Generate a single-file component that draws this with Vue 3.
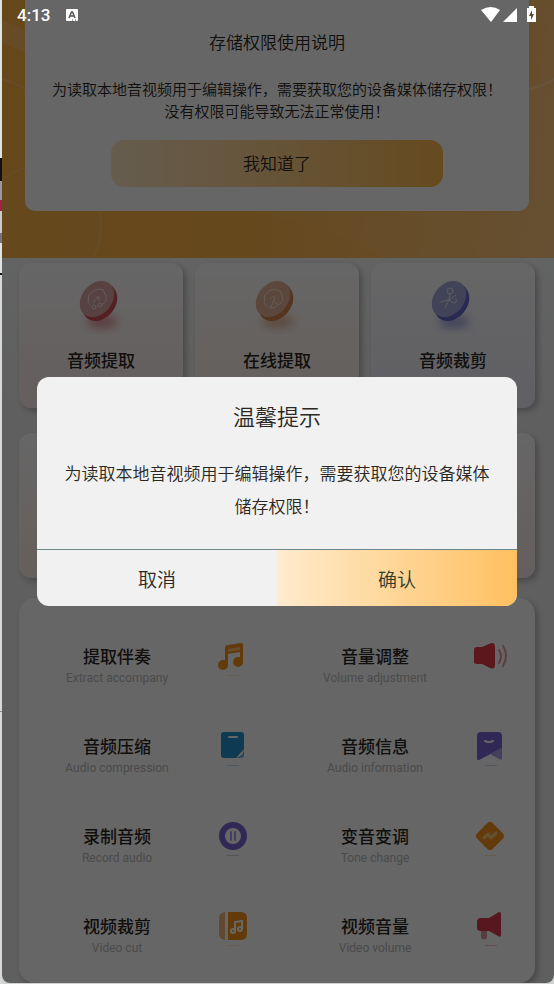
<template>
  <div class="screen">
    <div class="edge" aria-hidden="true"></div>
    <main class="phone">
      <!-- Permission banner -->
      <header class="banner">
        <svg class="banner-art" viewBox="0 0 552 258" preserveAspectRatio="none" aria-hidden="true">
          <path d="M0 20L23 30V52L0 43Z" fill="#fff" opacity=".14" />
          <path d="M0 79Q12 82 23 89" fill="none" stroke="#fff" stroke-width="2" opacity=".18" />
          <circle cx="38" cy="227" r="61" fill="#fff" fill-opacity=".03" stroke="#fff" stroke-opacity=".14" stroke-width="2" />
          <path d="M527 89Q541 86 552 79" fill="none" stroke="#fff" stroke-width="2" opacity=".3" />
          <path d="M250 212Q320 225 385 258H552V80Q541 86 527 89V212Z" fill="#fff" opacity=".04" />
        </svg>
        <section class="notice">
          <h2>存储权限使用说明</h2>
          <p>
            为读取本地音视频用于编辑操作，需要获取您的设备媒体储存权限！<br />
            没有权限可能导致无法正常使用！
          </p>
          <button type="button">我知道了</button>
        </section>
      </header>

      <!-- Tool cards -->
      <section class="cards">
        <article v-for="card in cards" :key="card.id" :class="['card', card.tone]">
          <template v-if="card.title">
            <svg width="60" height="60" viewBox="0 0 60 60" aria-hidden="true">
              <ellipse class="coin-shadow" cx="31" cy="48" rx="16" ry="6" />
              <g class="coin-rim">
                <ellipse cx="29" cy="29" rx="15" ry="20" transform="rotate(40 29 29)" />
                <ellipse cx="28" cy="27" rx="15" ry="20" transform="rotate(40 28 27)" />
              </g>
              <ellipse class="coin-face" cx="26" cy="25" rx="15" ry="20" transform="rotate(40 26 25)" />
              <g fill="none" stroke="#fff" stroke-width="1" stroke-linecap="round" stroke-linejoin="round" opacity=".7">
                <template v-if="card.icon === 'scissors'">
                  <circle cx="27" cy="17" r="3" />
                  <path d="M27 20L26 26L22 34M17 28L26 26L33 21M26 26L30 29Q35 29 33 25" />
                </template>
                <template v-else-if="card.icon === 'link'">
                  <path d="M21 33L17 29L18 21Q22 15 28 15L34 18L36 26L32 31M24 24Q27 21 28 24L26 28Q31 28 30 32L26 34H23L26 29" />
                </template>
                <template v-else>
                  <path d="M19 31L17 28L18 21L24 16Q28 14 32 16L35 22L35 27L32 30M22 28L28 23M25 23H28V26" />
                  <circle cx="23" cy="33" r="2" />
                  <circle cx="29" cy="31" r="2" />
                </template>
              </g>
            </svg>
            <h3>{{ card.title }}</h3>
          </template>
        </article>
      </section>

      <!-- Tool list -->
      <ul class="tools">
        <li v-for="tool in tools" :key="tool.en">
          <div class="tool-text">
            <h3>{{ tool.name }}</h3>
            <p>{{ tool.en }}</p>
          </div>
          <svg width="36" height="50" viewBox="0 0 36 50" aria-hidden="true">
            <g v-if="tool.icon === 'note'" fill="#f7951a">
              <path d="M10 24V7Q10 4 13 4L26 2Q28 2 28 4V22H25V11L13 13V25Z" />
              <path d="M13 8L25 6V9L13 11Z" fill="#fff" opacity=".4" />
              <circle cx="8" cy="24" r="5" />
              <circle cx="23" cy="21" r="5" />
            </g>
            <g v-else-if="tool.icon === 'volume'">
              <path d="M1 9Q1 6 4 6H9L16 3Q22 0 22 6V24Q22 29 17 27L9 23H4Q0 23 1 19Z" fill="#e53a49" />
              <path d="M26 9Q30 15 26 22M30 5Q36 14 30 25" fill="none" stroke="#e53a49" stroke-width="2" stroke-linecap="round" opacity=".55" />
            </g>
            <g v-else-if="tool.icon === 'compress'">
              <path d="M9 1H26Q29 1 29 4V18L21 27H9Q6 27 6 24V4Q6 1 9 1Z" fill="#2492cf" />
              <path d="M29 18Q28 26 20 27H26Q29 27 29 24Z" fill="#6db4dc" />
              <rect x="13" y="5" width="10" height="2" rx="1" fill="#fff" />
            </g>
            <g v-else-if="tool.icon === 'info'">
              <path d="M4 5Q4 1 8 1H25Q29 1 29 5V17L6 29Q4 30 4 27Z" fill="#7a64d8" />
              <path d="M29 17V27Q29 30 26 28L17 23Z" fill="#ab9fe6" />
              <path d="M12 10Q16 12 20 10" fill="none" stroke="#fff" stroke-width="2" stroke-linecap="round" />
            </g>
            <g v-else-if="tool.icon === 'record'">
              <circle cx="18" cy="15" r="11" fill="none" stroke="#7a64d8" stroke-width="6" />
              <path d="M16 11V19M20 11V19" stroke="#a99df0" stroke-width="2" stroke-linecap="round" />
            </g>
            <g v-else-if="tool.icon === 'tone'">
              <rect x="6" y="4" width="22" height="22" rx="4" fill="#f7951a" transform="rotate(45 17 15)" />
              <path d="M11 17L15 13L18 17L23 12" fill="none" stroke="#ffc882" stroke-width="3" stroke-linecap="round" stroke-linejoin="round" />
            </g>
            <g v-else-if="tool.icon === 'cut'">
              <path d="M10 1V29Q4 28 4 23V7Q4 2 10 1Z" fill="#efb47c" />
              <path d="M13 1H26Q32 1 32 7V23Q32 29 26 29H13Z" fill="#f7951a" />
              <path d="M20 20V11L27 10V18" fill="none" stroke="#fff" stroke-width="2" />
              <circle cx="18" cy="20" r="2" fill="none" stroke="#fff" stroke-width="2" />
              <circle cx="25" cy="18" r="2" fill="none" stroke="#fff" stroke-width="2" />
            </g>
            <g v-else>
              <path d="M8 18H14V27Q11 30 8 27Z" fill="#dc9aa0" />
              <path d="M4 11Q4 7 8 7H16L26 1Q28 1 28 3V24Q28 27 25 25L16 20H8Q4 20 4 17Z" fill="#d93a4b" />
            </g>
            <rect x="12" y="34" width="12" height="1" :fill="tool.shade" opacity=".3" />
          </svg>
        </li>
      </ul>

      <!-- Dialog -->
      <div class="mask">
        <section class="dialog" role="dialog" aria-modal="true" aria-labelledby="dialog-title">
          <h2 id="dialog-title">温馨提示</h2>
          <p>为读取本地音视频用于编辑操作，需要获取您的设备媒体储存权限！</p>
          <div class="actions">
            <button type="button">取消</button>
            <button type="button" class="confirm">确认</button>
          </div>
        </section>
      </div>

      <!-- Status bar -->
      <div class="status">
        <span>4:13</span>
        <svg width="12" height="12" viewBox="0 0 12 12" aria-hidden="true">
          <rect width="12" height="12" rx="1" fill="#fff" />
          <path d="M3 9L5.500 3H6.500L9 9M4 7H8" fill="none" stroke="#555" stroke-width="1.500" />
          <path d="M6 11H7M9 11H10" stroke="#555" />
        </svg>
        <svg class="signals" width="56" height="18" viewBox="0 0 56 18" fill="#fff" aria-hidden="true">
          <path d="M0 4Q10-2 19 4L10 16Z" />
          <path d="M36 2V16H22Z" />
          <path d="M48 0H53V2H55V16H46V2H48Z" />
          <path d="M51 4L48 10H50V14L53 8H51Z" fill="#5b4a30" />
        </svg>
      </div>
    </main>
  </div>
</template>

<script setup>
const cards = [
  { id: 1, title: '音频提取', icon: 'extract', tone: 'red' },
  { id: 2, title: '在线提取', icon: 'link', tone: 'orange' },
  { id: 3, title: '音频裁剪', icon: 'scissors', tone: 'blue' },
  { id: 4, tone: 'orange' },
  { id: 5, tone: 'blue' },
  { id: 6, tone: 'red' }
]

const tools = [
  { name: '提取伴奏', en: 'Extract accompany', icon: 'note', shade: '#ffb95c' },
  { name: '音量调整', en: 'Volume adjustment', icon: 'volume', shade: 'transparent' },
  { name: '音频压缩', en: 'Audio compression', icon: 'compress', shade: '#1996e0' },
  { name: '音频信息', en: 'Audio information', icon: 'info', shade: '#7259e2' },
  { name: '录制音频', en: 'Record audio', icon: 'record', shade: '#7259e2' },
  { name: '变音变调', en: 'Tone change', icon: 'tone', shade: '#ff9c14' },
  { name: '视频裁剪', en: 'Video cut', icon: 'cut', shade: '#ffb95c' },
  { name: '视频音量', en: 'Video volume', icon: 'megaphone', shade: '#ed3345' }
]
</script>

<style>
body {
  background: #d0d2d1;
}
</style>

<style scoped>
.screen {
  display: flex;
  min-height: 100vh;
  font-family: Roboto, "Noto Sans CJK SC", sans-serif;
  color: #2b2722;
}

h2,
h3,
p,
ul {
  margin: 0;
  padding: 0;
  font-weight: 350;
}

button {
  border: 0;
  background: none;
  color: inherit;
  font-family: inherit;
  font-weight: 350;
  cursor: pointer;
}

/* Strip of the window behind */
.edge {
  width: 2px;
  background: linear-gradient(
    #dde3df 158px, #111 158px, #111 181px, #999 181px, #999 200px,
    #a81e46 200px, #a81e46 211px, #c8ccc9 211px, #c8ccc9 233px,
    #777 233px, #777 243px, #dde3df 243px, #dde3df 273px, #111 273px,
    #111 275px, #d5d9d7 275px, #d5d9d7 711px, #888 711px, #888 712px, #d5d9d7 712px
  );
}

.phone {
  position: relative;
  flex: 1;
  min-width: 0;
  margin-bottom: 1px;
  overflow: hidden;
  border-radius: 0 0 8px 8px;
  background: linear-gradient(#f7f8f8 258px, #eeeeee 400px);
}

/* Banner */
.banner {
  position: relative;
  padding: 0 25px 47px 23px;
  background: linear-gradient(100deg, #ffb243, #ffb54a 50%, #ffc67a);
}

.banner-art {
  position: absolute;
  inset: 0;
  width: 100%;
  height: 100%;
}

.notice {
  position: relative;
  padding: 31px 24px 24px;
  border-radius: 0 0 10px 10px;
  background: #fff;
  text-align: center;
}

.notice h2 {
  font-size: 17px;
  line-height: 24px;
}

.notice p {
  margin: 24px -16px 17px;
  font-size: 15px;
  line-height: 22px;
}

.notice button {
  width: 73%;
  height: 47px;
  padding: 0 0 2px;
  border-radius: 13px;
  background: linear-gradient(90deg, #ffe8c5, #ffb94f);
  font-size: 17px;
}

/* Cards */
.cards {
  display: grid;
  grid-template-columns: repeat(3, 1fr);
  gap: 25px 12px;
  padding: 5px 19px 20px 17px;
}

.card {
  display: flex;
  flex-direction: column;
  align-items: center;
  gap: 15px;
  box-sizing: border-box;
  min-height: 145px;
  padding-top: 11px;
  border-radius: 12px;
  box-shadow: 3px 3px 6px rgba(0, 0, 0, 0.25);
}

.card h3,
.tools h3 {
  font-size: 17px;
  font-weight: 500;
  line-height: 24px;
}

.red {
  --rim: #cf5058;
  --face: #dda3a3;
  background: linear-gradient(#fff, #fcebea);
}

.orange {
  --rim: #d68551;
  --face: #e3b294;
  background: linear-gradient(#fff, #fceee6);
}

.blue {
  --rim: #6669cc;
  --face: #a6a8dc;
  background: linear-gradient(#fff, #efeffb);
}

.coin-rim {
  fill: var(--rim);
}

.coin-face {
  fill: var(--face);
}

.coin-shadow {
  fill: var(--rim);
  opacity: 0.6;
  filter: blur(5px);
}

/* List */
.tools {
  display: grid;
  grid-template-columns: 1fr 1fr;
  margin: 0 19px 0 17px;
  padding: 23px 0 2px;
  border-radius: 16px;
  background: #fff;
  box-shadow: 3px 3px 6px rgba(0, 0, 0, 0.25);
  list-style: none;
}

.tools li {
  display: flex;
  padding: 20px 0;
}

.tool-text {
  width: 76%;
  padding-top: 4px;
  text-align: center;
}

.tools p {
  color: #bbb;
  font-size: 12px;
  font-weight: 400;
  line-height: 18px;
}

/* Dialog */
.mask {
  position: absolute;
  inset: 0;
  display: flex;
  align-items: center;
  padding: 0 37px 0 35px;
  background: rgba(0, 0, 0, 0.6);
}

.dialog {
  flex: 1;
  overflow: hidden;
  border-radius: 12px;
  background: #f1f1f1;
  text-align: center;
}

.dialog h2 {
  padding-top: 25px;
  font-size: 22px;
  line-height: 32px;
}

.dialog p {
  padding: 24px 22px 25px;
  font-size: 17px;
  line-height: 33px;
}

.actions {
  display: flex;
  border-top: 1px solid #6f8789;
}

.actions button {
  flex: 1;
  height: 56px;
  font-size: 19px;
}

.actions .confirm {
  background: linear-gradient(90deg, #ffebcd, #fec061);
  color: #2f3b2c;
}

/* Status bar */
.status {
  position: absolute;
  top: 0;
  left: 0;
  right: 0;
  display: flex;
  align-items: center;
  gap: 16px;
  height: 30px;
  padding: 0 17px 0 15px;
  color: #fff;
  font-size: 17px;
  font-weight: 500;
}

.signals {
  margin-left: auto;
}
</style>
